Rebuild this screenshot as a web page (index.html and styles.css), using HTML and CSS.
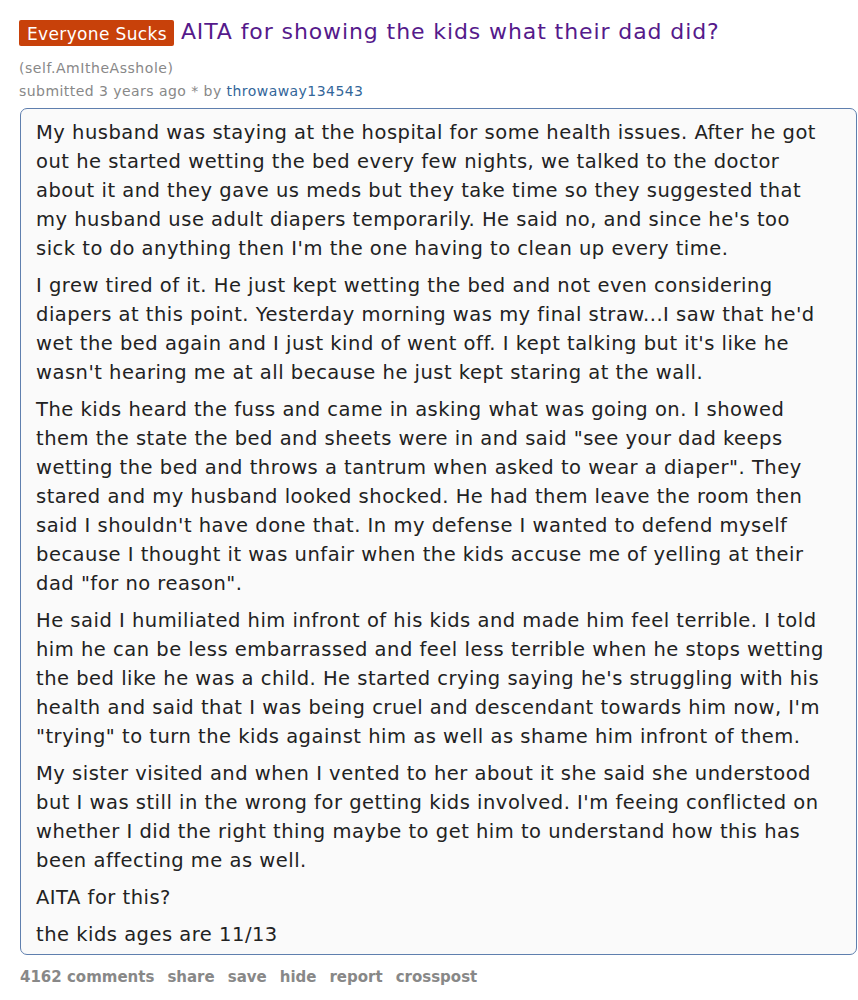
FILE: index.html
```html
<!DOCTYPE html>
<html>
<head>
<meta charset="utf-8">
<link rel="stylesheet" href="styles.css">
</head>
<body>
<div class="post">
  <div class="title-row">
    <span class="flair">Everyone Sucks</span>
    <a class="title">AITA for showing the kids what their dad did?</a>
  </div>
  <div class="domain">(self.AmItheAsshole)</div>
  <div class="tagline">submitted 3 years ago * by <a class="author">throwaway134543</a></div>
  <div class="usertext">
    <p>My husband was staying at the hospital for some health issues. After he got out he started wetting the bed every few nights, we talked to the doctor about it and they gave us meds but they take time so they suggested that my husband use adult diapers temporarily. He said no, and since he's too sick to do anything then I'm the one having to clean up every time.</p>
    <p>I grew tired of it. He just kept wetting the bed and not even considering diapers at this point. Yesterday morning was my final straw...I saw that he'd wet the bed again and I just kind of went off. I kept talking but it's like he wasn't hearing me at all because he just kept staring at the wall.</p>
    <p>The kids heard the fuss and came in asking what was going on. I showed them the state the bed and sheets were in and said "see your dad keeps wetting the bed and throws a tantrum when asked to wear a diaper". They stared and my husband looked shocked. He had them leave the room then said I shouldn't have done that. In my defense I wanted to defend myself because I thought it was unfair when the kids accuse me of yelling at their dad "for no reason".</p>
    <p>He said I humiliated him infront of his kids and made him feel terrible. I told him he can be less embarrassed and feel less terrible when he stops wetting the bed like he was a child. He started crying saying he's struggling with his health and said that I was being cruel and descendant towards him now, I'm "trying" to turn the kids against him as well as shame him infront of them.</p>
    <p>My sister visited and when I vented to her about it she said she understood but I was still in the wrong for getting kids involved. I'm feeing conflicted on whether I did the right thing maybe to get him to understand how this has been affecting me as well.</p>
    <p>AITA for this?</p>
    <p>the kids ages are 11/13</p>
  </div>
  <ul class="buttons">
    <li>4162 comments</li>
    <li>share</li>
    <li>save</li>
    <li>hide</li>
    <li>report</li>
    <li>crosspost</li>
  </ul>
</div>
</body>
</html>
```
FILE: styles.css
```css
html, body {
  margin: 0;
  padding: 0;
  background: #ffffff;
}
body {
  font-family: "DejaVu Sans", Verdana, sans-serif;
}
.post {
  padding: 16px 0 0 19px;
}
.title-row {
  display: flex;
  align-items: flex-start;
  gap: 7px;
}
.flair {
  margin-top: 4px;
  background: #c8410a;
  color: #ffffff;
  font-size: 17px;
  letter-spacing: 0.35px;
  line-height: 23px;
  padding: 3px 7px 0 8px;
  border-radius: 2px;
}
.title {
  margin-top: 2px;
  color: #551a8b;
  font-size: 22px;
  letter-spacing: 0.9px;
  line-height: 28px;
}
.domain {
  color: #888888;
  font-size: 14px;
  letter-spacing: 0.55px;
  margin-top: 11px;
  line-height: 22px;
}
.tagline {
  color: #888888;
  font-size: 14px;
  letter-spacing: 0.45px;
  line-height: 24px;
}
.author {
  color: #336699;
}
.usertext {
  margin: 5px 0 0 1px;
  width: 837px;
  box-sizing: border-box;
  background: #fafafa;
  border: 1px solid #5f7fae;
  border-radius: 7px;
  padding: 0 26px 0 15px;
  color: #222222;
  font-size: 19.5px;
  letter-spacing: 0.5px;
  line-height: 29px;
}
.usertext p {
  margin: 8px 0;
}
.usertext p:first-child {
  margin-top: 9px;
}
.usertext p:last-child {
  margin-bottom: 5px;
}
.buttons {
  list-style: none;
  margin: 7px 0 0 1px;
  padding: 0;
  display: flex;
  gap: 13px;
  font-size: 15px;
  font-weight: bold;
  color: #888888;
  line-height: 30px;
}
```
